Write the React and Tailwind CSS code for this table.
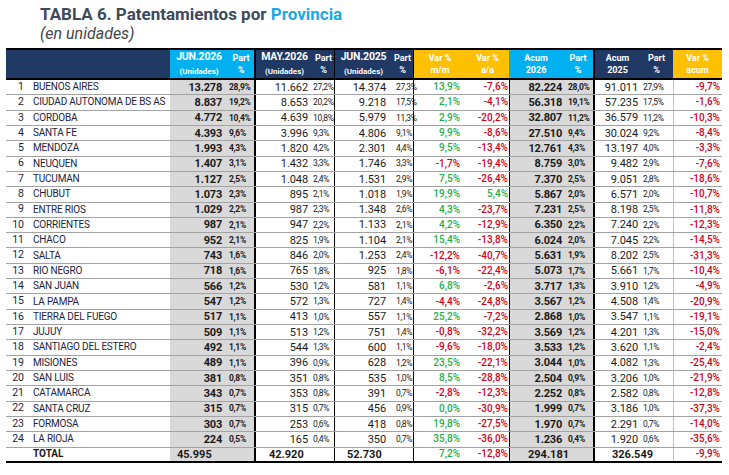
const rows = [
  ["1", "BUENOS AIRES", "13.278", "28,9%", "11.662", "27,2%", "14.374", "27,3%", "13,9%", "-7,6%", "82.224", "28,0%", "91.011", "27,9%", "-9,7%"],
  ["2", "CIUDAD AUTONOMA DE BS AS", "8.837", "19,2%", "8.653", "20,2%", "9.218", "17,5%", "2,1%", "-4,1%", "56.318", "19,1%", "57.235", "17,5%", "-1,6%"],
  ["3", "CORDOBA", "4.772", "10,4%", "4.639", "10,8%", "5.979", "11,3%", "2,9%", "-20,2%", "32.807", "11,2%", "36.579", "11,2%", "-10,3%"],
  ["4", "SANTA FE", "4.393", "9,6%", "3.996", "9,3%", "4.806", "9,1%", "9,9%", "-8,6%", "27.510", "9,4%", "30.024", "9,2%", "-8,4%"],
  ["5", "MENDOZA", "1.993", "4,3%", "1.820", "4,2%", "2.301", "4,4%", "9,5%", "-13,4%", "12.761", "4,3%", "13.197", "4,0%", "-3,3%"],
  ["6", "NEUQUEN", "1.407", "3,1%", "1.432", "3,3%", "1.746", "3,3%", "-1,7%", "-19,4%", "8.759", "3,0%", "9.482", "2,9%", "-7,6%"],
  ["7", "TUCUMAN", "1.127", "2,5%", "1.048", "2,4%", "1.531", "2,9%", "7,5%", "-26,4%", "7.370", "2,5%", "9.051", "2,8%", "-18,6%"],
  ["8", "CHUBUT", "1.073", "2,3%", "895", "2,1%", "1.018", "1,9%", "19,9%", "5,4%", "5.867", "2,0%", "6.571", "2,0%", "-10,7%"],
  ["9", "ENTRE RIOS", "1.029", "2,2%", "987", "2,3%", "1.348", "2,6%", "4,3%", "-23,7%", "7.231", "2,5%", "8.198", "2,5%", "-11,8%"],
  ["10", "CORRIENTES", "987", "2,1%", "947", "2,2%", "1.133", "2,1%", "4,2%", "-12,9%", "6.350", "2,2%", "7.240", "2,2%", "-12,3%"],
  ["11", "CHACO", "952", "2,1%", "825", "1,9%", "1.104", "2,1%", "15,4%", "-13,8%", "6.024", "2,0%", "7.045", "2,2%", "-14,5%"],
  ["12", "SALTA", "743", "1,6%", "846", "2,0%", "1.253", "2,4%", "-12,2%", "-40,7%", "5.631", "1,9%", "8.202", "2,5%", "-31,3%"],
  ["13", "RIO NEGRO", "718", "1,6%", "765", "1,8%", "925", "1,8%", "-6,1%", "-22,4%", "5.073", "1,7%", "5.661", "1,7%", "-10,4%"],
  ["14", "SAN JUAN", "566", "1,2%", "530", "1,2%", "581", "1,1%", "6,8%", "-2,6%", "3.717", "1,3%", "3.910", "1,2%", "-4,9%"],
  ["15", "LA PAMPA", "547", "1,2%", "572", "1,3%", "727", "1,4%", "-4,4%", "-24,8%", "3.567", "1,2%", "4.508", "1,4%", "-20,9%"],
  ["16", "TIERRA DEL FUEGO", "517", "1,1%", "413", "1,0%", "557", "1,1%", "25,2%", "-7,2%", "2.868", "1,0%", "3.547", "1,1%", "-19,1%"],
  ["17", "JUJUY", "509", "1,1%", "513", "1,2%", "751", "1,4%", "-0,8%", "-32,2%", "3.569", "1,2%", "4.201", "1,3%", "-15,0%"],
  ["18", "SANTIAGO DEL ESTERO", "492", "1,1%", "544", "1,3%", "600", "1,1%", "-9,6%", "-18,0%", "3.533", "1,2%", "3.620", "1,1%", "-2,4%"],
  ["19", "MISIONES", "489", "1,1%", "396", "0,9%", "628", "1,2%", "23,5%", "-22,1%", "3.044", "1,0%", "4.082", "1,3%", "-25,4%"],
  ["20", "SAN LUIS", "381", "0,8%", "351", "0,8%", "535", "1,0%", "8,5%", "-28,8%", "2.504", "0,9%", "3.206", "1,0%", "-21,9%"],
  ["21", "CATAMARCA", "343", "0,7%", "353", "0,8%", "391", "0,7%", "-2,8%", "-12,3%", "2.252", "0,8%", "2.582", "0,8%", "-12,8%"],
  ["22", "SANTA CRUZ", "315", "0,7%", "315", "0,7%", "456", "0,9%", "0,0%", "-30,9%", "1.999", "0,7%", "3.186", "1,0%", "-37,3%"],
  ["23", "FORMOSA", "303", "0,7%", "253", "0,6%", "418", "0,8%", "19,8%", "-27,5%", "1.970", "0,7%", "2.291", "0,7%", "-14,0%"],
  ["24", "LA RIOJA", "224", "0,5%", "165", "0,4%", "350", "0,7%", "35,8%", "-36,0%", "1.236", "0,4%", "1.920", "0,6%", "-35,6%"],
];

const grid =
  "grid grid-cols-[24px_140px_58px_26px_59px_21px_58px_21px_53px_43px_54px_30px_47px_33px_49px]";

// vertical rules, per column
const rules = [
  "",
  "",
  "",
  "",
  "border-l-2 border-black",
  "",
  "border-l border-black",
  "",
  "border-l border-black",
  "",
  "border-l border-black",
  "",
  "border-l-2 border-black",
  "",
  "border-l border-[#bfbfbf]",
];

const body = [
  "text-right pr-[6px] text-[10.5px] text-[#1c2340]",
  "pl-[3px] text-[10px] tracking-[-0.2px] text-[#1c2340] whitespace-nowrap",
  "bg-[#d9d9d9] text-right pr-[6px] text-[11px] tracking-[-0.2px] font-bold text-[#1a1a1a]",
  "bg-[#d9d9d9] text-left pl-[1px] text-[8.5px] font-bold tracking-[-0.3px] text-[#1a1a1a]",
  "text-right pr-[5px] text-[11px] tracking-[-0.1px] text-[#1a1a1a]",
  "text-left text-[8.5px] tracking-[-0.3px] text-[#1a1a1a]",
  "text-right pr-[6px] text-[11px] tracking-[-0.1px] text-[#1a1a1a]",
  "text-left pl-[4px] text-[8.5px] tracking-[-0.3px] text-[#1a1a1a]",
  "text-right pr-[6px] text-[10px] font-medium",
  "text-right pr-[1px] text-[10px] font-medium",
  "bg-[#d9d9d9] text-right pr-[1px] text-[11px] tracking-[-0.2px] font-bold text-[#1a1a1a]",
  "bg-[#d9d9d9] text-left pl-[5px] text-[8.5px] font-bold tracking-[-0.3px] text-[#1a1a1a]",
  "text-right pr-[2px] text-[11px] tracking-[-0.1px] text-[#1a1a1a]",
  "text-left pl-[3px] text-[8.5px] tracking-[-0.3px] text-[#1a1a1a]",
  "text-right pr-[2px] text-[10px] font-medium",
];

const varCols = [8, 9, 14];

function tone(v) {
  return v.startsWith("-") ? "text-[#d0021b]" : "text-[#1fae4b]";
}

function HeadCell({ top, bottom, small, bg, rule }) {
  return (
    <div
      className={`${bg} ${rule} flex flex-col items-center justify-center text-white font-bold leading-none`}
    >
      {small ? (
        <>
          <span className="text-[9px]">{top}</span>
          <span className="text-[9px] mt-[3px]">{bottom}</span>
        </>
      ) : (
        <>
          <span className="text-[10.5px] tracking-[-0.2px]">{top}</span>
          {bottom && <span className="text-[8px] mt-[6px]">{bottom}</span>}
        </>
      )}
    </div>
  );
}

const navy = "bg-[#203864]";
const cyan = "bg-[#00b0f0]";
const yellow = "bg-[#ffc000]";

export default function App() {
  return (
    <div className="w-[729px] h-[475px] bg-white font-['Roboto',sans-serif] overflow-hidden">
      <div className="pl-[40px] pt-[4px]">
        <h1 className="text-[17px] font-bold leading-[20px] text-[#3d4a5b]">
          TABLA 6. Patentamientos por <span className="text-[#1aa9e2]">Provincia</span>
        </h1>
        <p className="text-[16px] italic leading-[20px] text-[#444]">(en unidades)</p>
      </div>

      <div className="ml-[6px] mt-[4px] w-[716px]">
        {/* header */}
        <div className={`${grid} h-[32px] border-t-2 border-b-2 border-black`}>
          <div className={`${navy} col-span-2`} />
          <HeadCell bg={cyan} rule="" top="JUN.2026" bottom="(Unidades)" />
          <HeadCell bg={cyan} rule="" top="Part" bottom="%" small />
          <HeadCell bg={navy} rule="border-l-2 border-black" top="MAY.2026" bottom="(Unidades)" />
          <HeadCell bg={navy} rule="" top="Part" bottom="%" small />
          <HeadCell bg={navy} rule="border-l border-black" top="JUN.2025" bottom="(Unidades)" />
          <HeadCell bg={navy} rule="" top="Part" bottom="%" small />
          <HeadCell bg={yellow} rule="border-l border-black" top="Var %" bottom="m/m" small />
          <HeadCell bg={yellow} rule="" top="Var %" bottom="a/a" small />
          <HeadCell bg={cyan} rule="" top="Acum" bottom="2026" small />
          <HeadCell bg={cyan} rule="" top="Part" bottom="%" small />
          <HeadCell bg={navy} rule="border-l-2 border-black" top="Acum" bottom="2025" small />
          <HeadCell bg={navy} rule="" top="Part" bottom="%" small />
          <HeadCell bg={yellow} rule="" top="Var %" bottom="acum" small />
        </div>

        {/* rows */}
        {rows.map((r) => (
          <div key={r[0]} className={`${grid} h-[15.32px] border-b border-[#a3a3a3]`}>
            {r.map((v, i) => (
              <div
                key={i}
                className={`${body[i]} ${rules[i]} ${varCols.includes(i) ? tone(v) : ""} flex items-center ${
                  body[i].includes("text-right") ? "justify-end" : "justify-start"
                } leading-none`}
              >
                {v}
              </div>
            ))}
          </div>
        ))}

        {/* total */}
        <div className={`${grid} h-[15.5px] border-b-2 border-black text-[11px] font-bold text-[#1a1a1a] leading-none`}>
          <div />
          <div className="pl-[3px] text-[10px] flex items-center">TOTAL</div>
          <div className="bg-[#d9d9d9] col-span-2 flex items-center pl-[7px]">45.995</div>
          <div className="border-l-2 border-black col-span-2 flex items-center pl-[13px]">42.920</div>
          <div className="border-l border-black col-span-2 flex items-center pl-[12px]">52.730</div>
          <div className="border-l border-black flex items-center justify-end pr-[6px] text-[10px] font-medium text-[#1fae4b]">
            7,2%
          </div>
          <div className="flex items-center justify-end pr-[1px] text-[10px] font-medium text-[#d0021b]">-12,8%</div>
          <div className="border-l border-black bg-[#d9d9d9] col-span-2 flex items-center pl-[18px]">294.181</div>
          <div className="border-l-2 border-black col-span-2 flex items-center pl-[17px]">326.549</div>
          <div className="border-l border-[#bfbfbf] flex items-center justify-end pr-[2px] text-[10px] font-medium text-[#d0021b]">
            -9,9%
          </div>
        </div>
      </div>
    </div>
  );
}
